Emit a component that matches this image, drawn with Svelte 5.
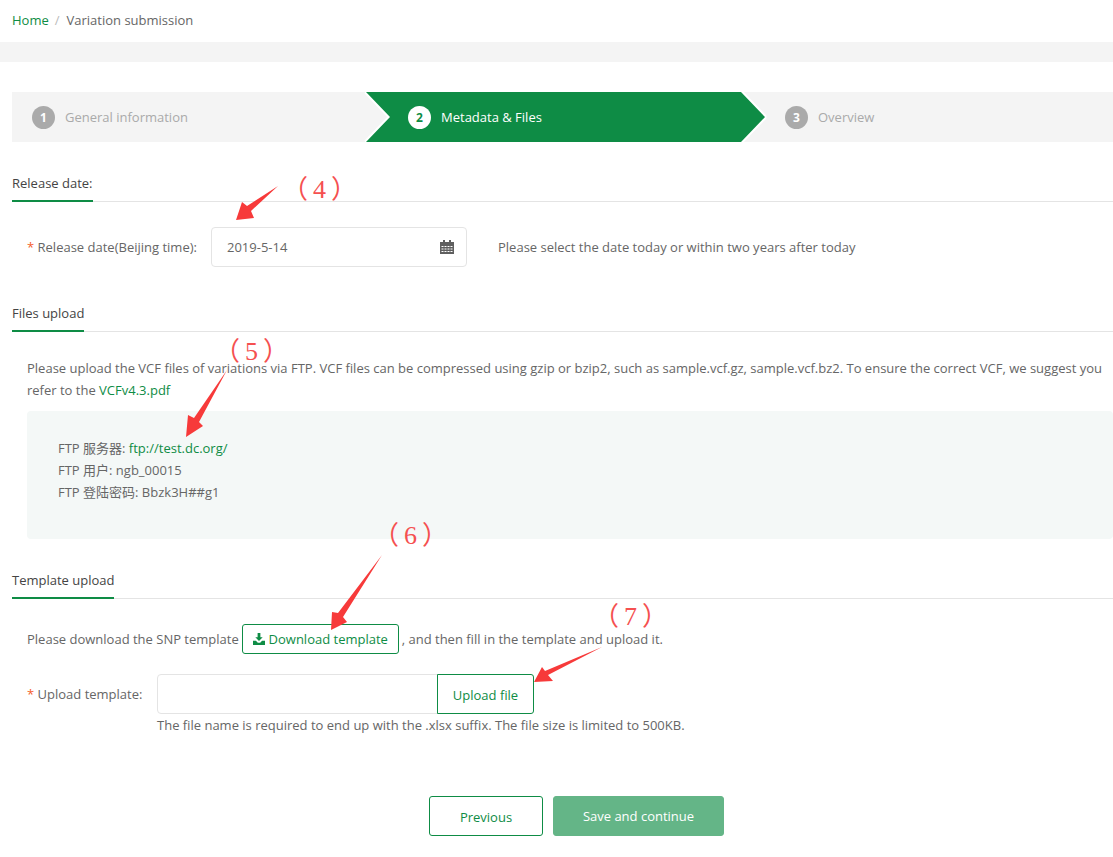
<script>
	const ftp = { server: 'ftp://test.dc.org/', user: 'ngb_00015', password: 'Bbzk3H##g1' };

	// red markers drawn over the page
	const arrows = [
		'278,186 251,211 254,218 236,220 242,202 247,206',
		'227,370 199,422 203,426 186,437 188,415 194,418',
		'382,555 343,617 347,622 331,630 332,612 338,613',
		'602,647 548,675 553,681 534,682 542,667 545,671'
	];
	const marks = [
		{ text: '（4）', cls: 'm4' },
		{ text: '（5）', cls: 'm5' },
		{ text: '（6）', cls: 'm6' },
		{ text: '（7）', cls: 'm7' }
	];
</script>

<div class="page">
	<div class="crumbs">
		<a href="#home">Home</a><span class="sep">/</span><span class="here">Variation submission</span>
	</div>
	<div class="band"></div>

	<div class="main">
		<div class="steps">
			<div class="step first">
				<span class="num">1</span><span>General information</span>
			</div>
			<div class="step active">
				<svg class="shape" width="399" height="50" viewBox="0 0 399 50">
					<polygon points="0,0 375,0 399,25 375,50 0,50 24,25" />
				</svg>
				<span class="num">2</span><span class="name">Metadata &amp; Files</span>
			</div>
			<div class="step last">
				<span class="num">3</span><span>Overview</span>
			</div>
		</div>

		<div class="head first-head"><span>Release date:</span></div>
		<div class="row date-row">
			<label class="label date-label" for="release"><i>*</i> Release date(Beijing time):</label>
			<div class="date-box">
				<input id="release" value="2019-5-14" />
				<svg width="14" height="14" viewBox="0 0 14 14">
					<path fill="#5f5f5f" d="M3 0h2v2h4V0h2v2h3v12H0V2h3z" />
					<path fill="#fff" d="M1.500 6h2v1h-2zM4.500 6h2v1h-2zM7.500 6h2v1h-2zM10.500 6h2v1h-2zM1.500 8.500h2v1h-2zM4.500 8.500h2v1h-2zM7.500 8.500h2v1h-2zM10.500 8.500h2v1h-2zM1.500 11h2v1h-2zM4.500 11h2v1h-2zM7.500 11h2v1h-2zM10.500 11h2v1h-2z" />
				</svg>
			</div>
			<span class="hint">Please select the date today or within two years after today</span>
		</div>

		<div class="head files-head"><span>Files upload</span></div>
		<p class="intro">
			Please upload the VCF files of variations via FTP. VCF files can be compressed using gzip or bzip2, such as sample.vcf.gz, sample.vcf.bz2. To ensure the correct VCF, we suggest you refer to the <a href="#pdf">VCFv4.3.pdf</a>
		</p>
		<div class="panel">
			<div>FTP 服务器: <a href="#ftp">{ftp.server}</a></div>
			<div>FTP 用户: {ftp.user}</div>
			<div>FTP 登陆密码: {ftp.password}</div>
		</div>

		<div class="head tpl-head"><span>Template upload</span></div>
		<div class="row dl-row">
			<span>Please download the SNP template</span>
			<button class="dl">
				<svg width="12" height="12" viewBox="0 0 13 13" fill="#0e8c45">
					<path d="M5 0h3v4.500h2.500L6.500 8.600 2.500 4.500H5z" />
					<path d="M0 8.500h3.200l2 2h2.600l2-2H13V13H0z" />
				</svg>
				Download template
			</button>
			<span>, and then fill in the template and upload it.</span>
		</div>
		<div class="row up-row">
			<label class="label up-label" for="tpl"><i>*</i> Upload template:</label>
			<div class="up-box">
				<input id="tpl" />
				<button class="up">Upload file</button>
			</div>
		</div>
		<div class="note">The file name is required to end up with the .xlsx suffix. The file size is limited to 500KB.</div>

		<div class="actions">
			<button class="prev">Previous</button>
			<button class="save">Save and continue</button>
		</div>
	</div>

	<svg class="overlay" width="1113" height="857" viewBox="0 0 1113 857">
		{#each arrows as points}
			<polygon {points} fill="#f73a3a" />
		{/each}
	</svg>
	{#each marks as m}
		<span class="mark {m.cls}">{m.text}</span>
	{/each}
</div>

<style>
	:global(body) {
		background: #fff;
	}

	.page {
		position: relative;
		height: 857px;
		overflow: hidden;
		font-family: "Open Sans", "Noto Sans CJK SC", sans-serif;
		font-size: 13px;
		line-height: 22px;
		color: #666;
	}

	a {
		color: #0e8c45;
		text-decoration: none;
	}

	.crumbs {
		height: 42px;
		padding: 9px 12px 0;
		box-sizing: border-box;
	}

	.sep {
		color: #bbb;
		margin: 0 7px 0 6px;
	}

	.band {
		height: 20px;
		background: #f4f4f4;
	}

	.main {
		padding-left: 12px;
	}

	/* steps */
	.steps {
		display: flex;
		height: 50px;
		margin-top: 30px;
		background: #f4f4f4;
		color: #aaa;
	}

	.step {
		display: flex;
		align-items: center;
		position: relative;
	}

	.step.first {
		width: 354px;
		padding-left: 20px;
		box-sizing: border-box;
	}

	.step.active {
		width: 399px;
		padding-left: 42px;
		box-sizing: border-box;
		color: #fff;
	}

	.step.last {
		padding-left: 20px;
	}

	.shape {
		position: absolute;
		left: 0;
		top: 0;
		overflow: visible;
	}

	.shape polygon {
		fill: #0e8c45;
		stroke: #fff;
		stroke-width: 4px;
		paint-order: stroke;
		stroke-linejoin: bevel;
	}

	.num {
		position: relative;
		width: 23px;
		height: 23px;
		margin-right: 10px;
		border-radius: 50%;
		background: #aaa;
		color: #fff;
		font-size: 12px;
		font-weight: 700;
		line-height: 24px;
		text-align: center;
	}

	.active .num {
		background: #fff;
		color: #0e8c45;
	}

	.name {
		position: relative;
	}

	/* section headings */
	.head {
		height: 30px;
		border-bottom: 1px solid #e4e4e4;
		box-sizing: border-box;
		color: #444;
	}

	.head span {
		display: inline-block;
		height: 30px;
		border-bottom: 2px solid #0e8c45;
		box-sizing: border-box;
	}

	.first-head {
		margin-top: 30px;
	}

	.files-head {
		margin-top: 35px;
	}

	.tpl-head {
		margin-top: 30px;
	}

	.row {
		display: flex;
		align-items: center;
		padding-left: 15px;
	}

	.label i {
		color: #f5602a;
		font-style: normal;
	}

	.date-row {
		margin-top: 25px;
	}

	.date-label {
		width: 184px;
	}

	.date-box {
		display: flex;
		align-items: center;
		width: 256px;
		height: 40px;
		padding: 0 12px 0 15px;
		border: 1px solid #e4e4e4;
		border-radius: 4px;
		box-sizing: border-box;
	}

	input {
		flex: 1;
		min-width: 0;
		border: 0;
		outline: 0;
		padding: 0;
		background: none;
		font: inherit;
		color: #666;
	}

	.hint {
		margin-left: 31px;
	}

	.intro {
		margin: 25px 0 10px;
		padding-left: 15px;
	}

	.panel {
		margin-left: 15px;
		padding: 26px 31px 36px;
		border-radius: 4px;
		background: #f4f8f7;
	}

	button {
		font: inherit;
		background: #fff;
		border: 1px solid #0e8c45;
		color: #0e8c45;
		cursor: pointer;
		padding: 0;
	}

	.dl-row {
		margin-top: 25px;
		gap: 3px;
	}

	.dl {
		display: flex;
		align-items: center;
		gap: 4px;
		height: 30px;
		width: 157px;
		justify-content: center;
		border-radius: 3px;
	}

	.up-row {
		margin-top: 20px;
	}

	.up-label {
		width: 130px;
	}

	.up-box {
		display: flex;
		width: 377px;
		height: 40px;
		border: 1px solid #e4e4e4;
		border-radius: 4px;
		box-sizing: border-box;
	}

	.up {
		width: 97px;
		height: 40px;
		margin: -1px -1px -1px 0;
		border-radius: 0 3px 3px 0;
		flex: none;
		padding-top: 1px;
	}

	.note {
		margin: 0 0 0 145px;
	}

	.actions {
		display: flex;
		gap: 10px;
		margin: 60px 0 0 417px;
	}

	.actions button {
		height: 40px;
		border-radius: 3px;
	}

	.prev {
		width: 114px;
		padding-top: 2px;
	}

	.save {
		width: 171px;
		background: #64b587;
		border-color: #64b587;
		color: #fff;
		font-weight: 500;
	}

	/* annotations on top of the page */
	.overlay {
		position: absolute;
		left: 0;
		top: 0;
		pointer-events: none;
	}

	.mark {
		position: absolute;
		font-family: "Liberation Serif", "Noto Sans CJK SC", serif;
		font-size: 26px;
		line-height: 30px;
		letter-spacing: 5px;
		color: #f55050;
		white-space: nowrap;
	}

	.m4 {
		left: 282px;
		top: 175px;
	}

	.m5 {
		left: 214px;
		top: 337px;
	}

	.m6 {
		left: 373px;
		top: 521px;
	}

	.m7 {
		left: 593px;
		top: 602px;
	}
</style>
